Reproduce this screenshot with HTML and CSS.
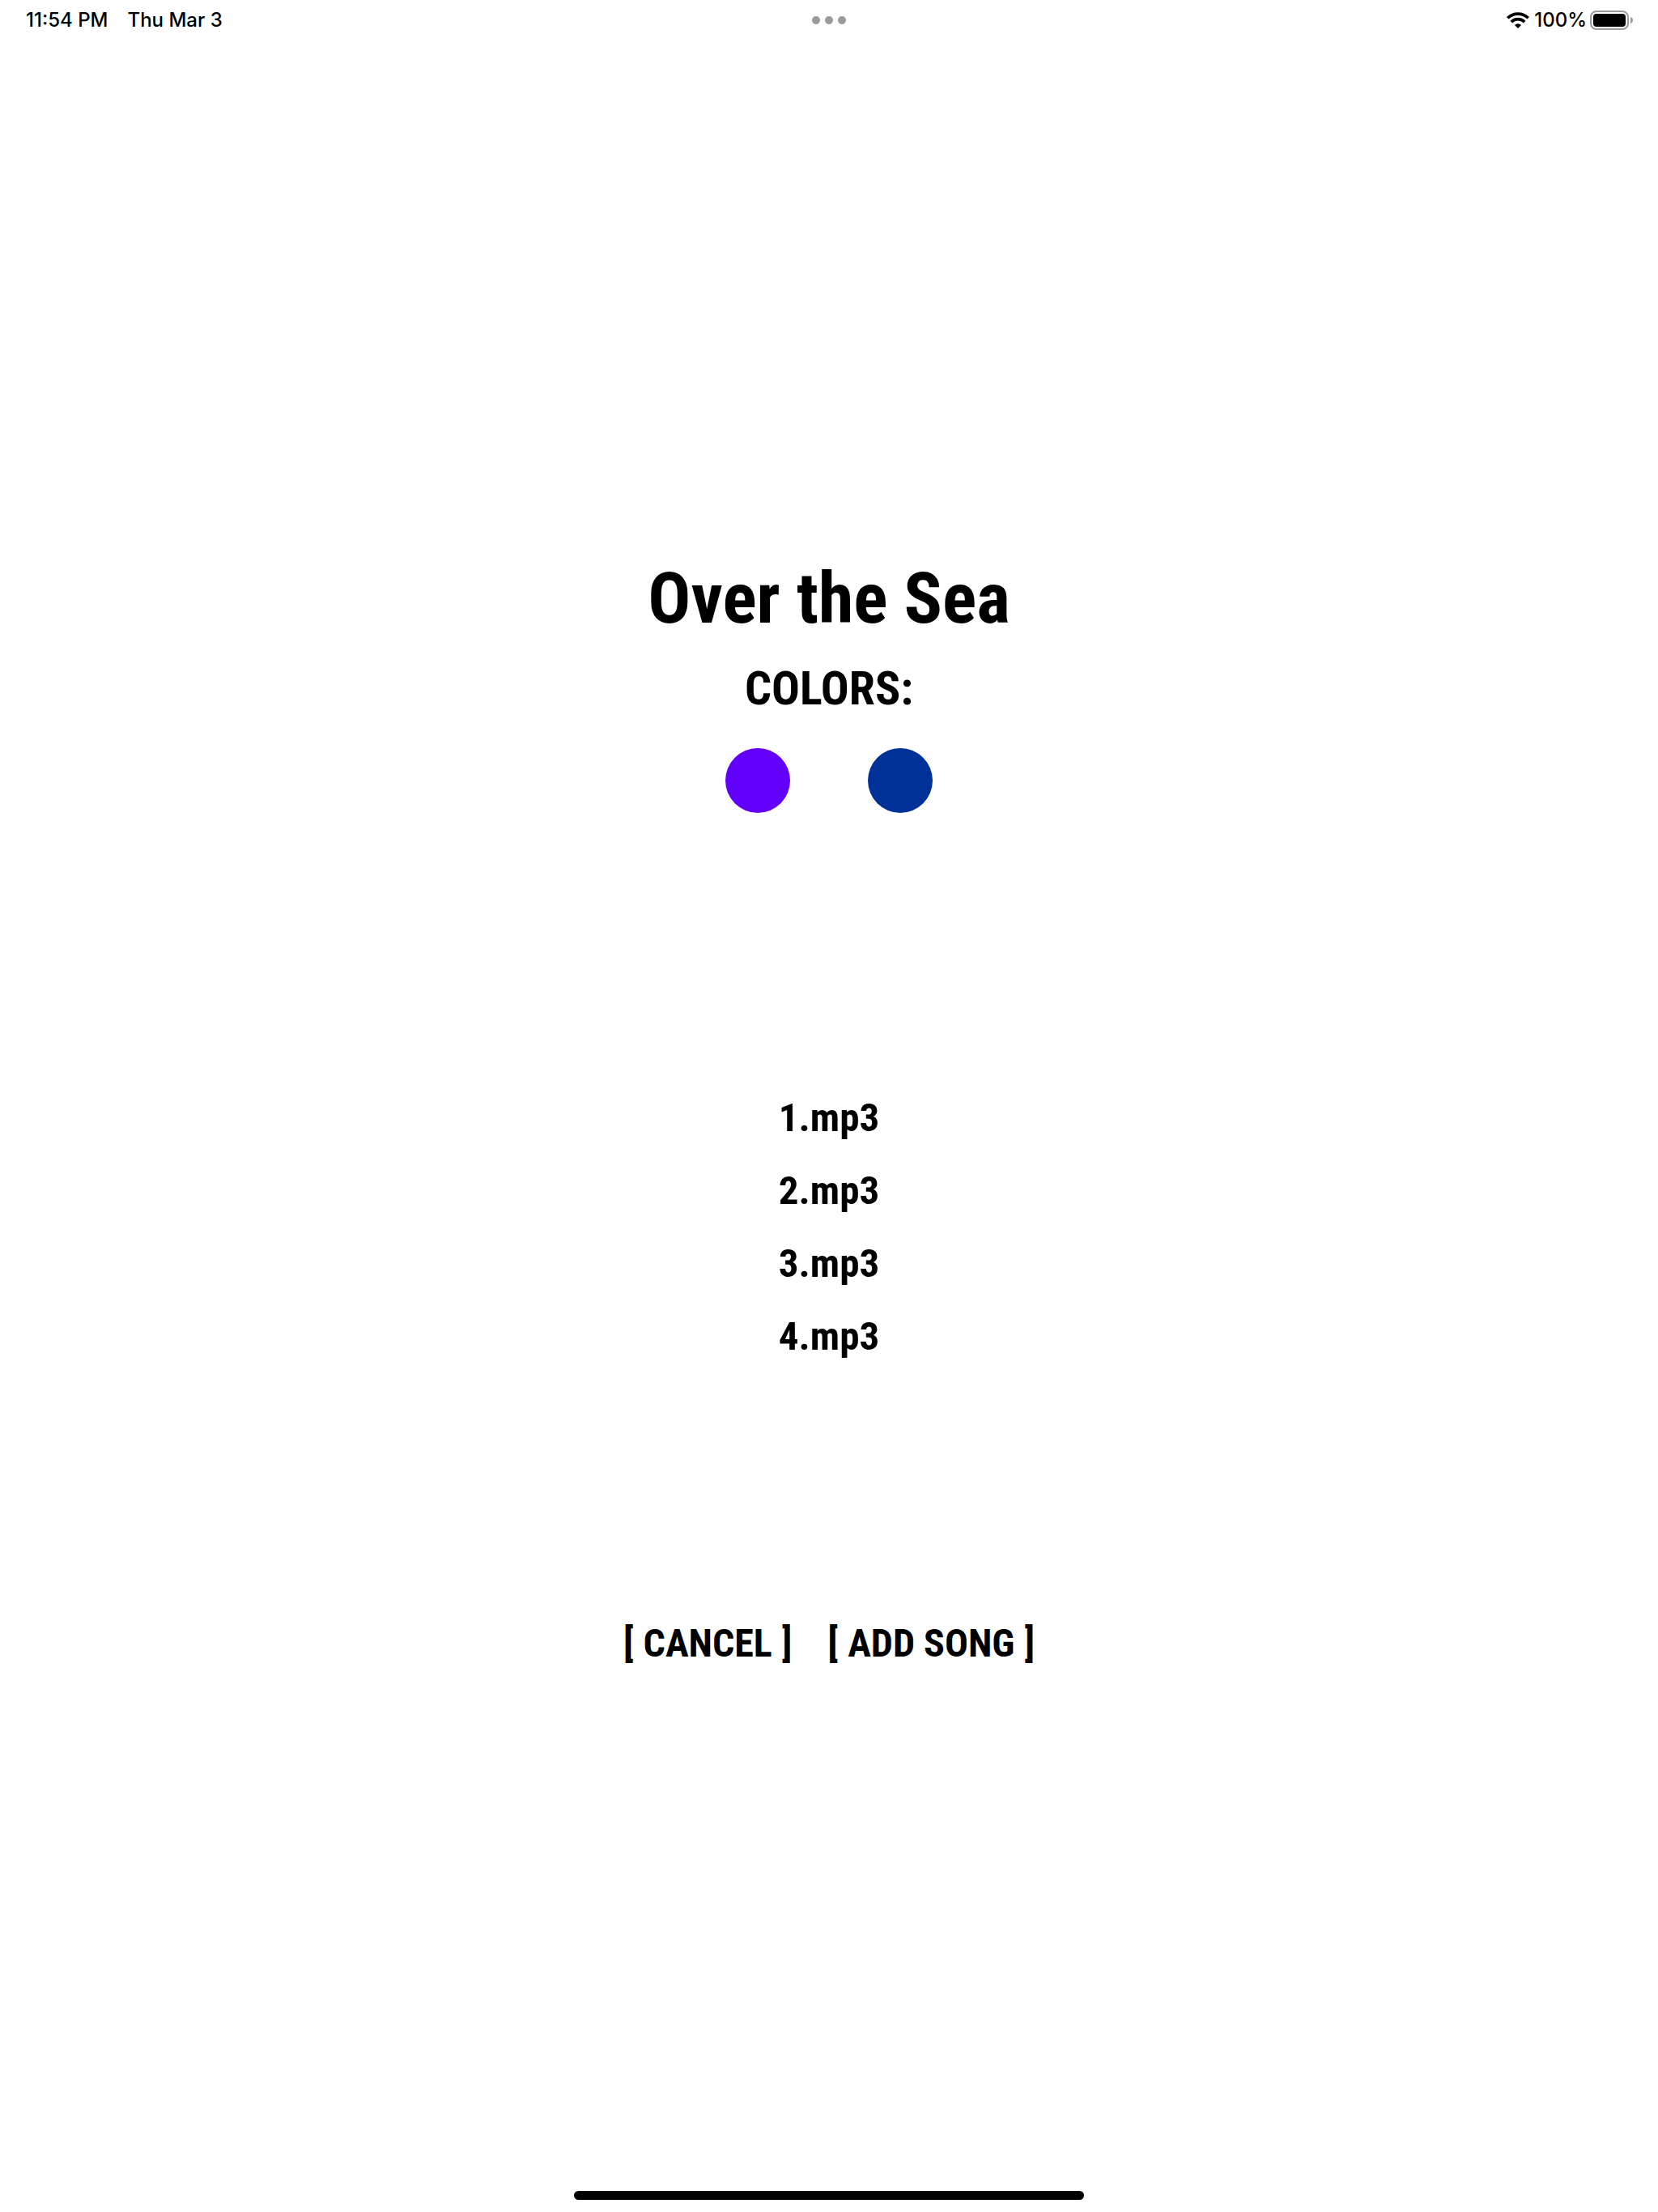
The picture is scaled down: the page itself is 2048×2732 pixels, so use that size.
FILE: index.html
```html
<!DOCTYPE html>
<html lang="en">
<head>
<meta charset="utf-8">
<meta name="viewport" content="width=device-width, initial-scale=1">
<title>Over the Sea</title>
<link rel="stylesheet" href="styles.css">
</head>
<body>
<div class="screen">
  <header class="status-bar">
    <div class="status-left"><span>11:54 PM</span><span>Thu Mar 3</span></div>
    <div class="multitask"><i class="dot"></i><i class="dot"></i><i class="dot"></i></div>
    <div class="status-right">
      <svg class="wifi" viewBox="0 0 28 20" aria-hidden="true">
        <g fill="none" stroke="#000" stroke-width="3.7">
          <path d="M1.2 7.3a18.2 18.2 0 0 1 25.6 0"/>
          <path d="M5.8 12.1a11.6 11.6 0 0 1 16.4 0"/>
        </g>
        <path d="M14 20l-4-4.1a5.8 5.8 0 0 1 8 0z"/>
      </svg>
      <span>100%</span>
      <svg class="battery" viewBox="0 0 54 24" aria-hidden="true">
        <rect x="1" y="1" width="46" height="22" rx="7" fill="none" stroke="#999" stroke-width="2"/>
        <rect x="4" y="4" width="40" height="16" rx="4"/>
        <path d="M50 8q3 1 3 4t-3 4z" fill="#999"/>
      </svg>
    </div>
  </header>
  <main class="album">
    <h1 class="title">Over the Sea</h1>
    <h2 class="subtitle">COLORS:</h2>
    <div class="swatches">
      <button class="swatch swatch-purple" type="button" aria-label="Purple"></button>
      <button class="swatch swatch-blue" type="button" aria-label="Blue"></button>
    </div>
    <ul class="songs">
      <li>1.mp3</li>
      <li>2.mp3</li>
      <li>3.mp3</li>
      <li>4.mp3</li>
    </ul>
    <div class="actions">
      <button class="action" type="button"><span>[</span><span>CANCEL</span><span>]</span></button>
      <button class="action" type="button"><span>[</span><span>ADD SONG</span><span>]</span></button>
    </div>
  </main>
  <footer class="home"><div class="home-indicator"></div></footer>
</div>
</body>
</html>
```
FILE: styles.css
```css
* { box-sizing: border-box; }

body {
  margin: 0;
  background: #fff;
  color: #000;
  font-family: "Roboto Condensed", "Arial Narrow", Roboto, sans-serif;
}

.screen {
  min-height: 100vh;
  display: flex;
  flex-direction: column;
}

.status-bar {
  height: 50px;
  padding: 0 32px;
  display: grid;
  grid-template-columns: 1fr auto 1fr;
  align-items: center;
  font: 500 24px/48px Inter, sans-serif;
}

.status-left { display: flex; gap: 24px; }
.multitask { display: flex; gap: 6px; }
.dot { width: 10px; height: 10px; border-radius: 50%; background: #999; }
.status-right { display: flex; justify-content: flex-end; align-items: center; gap: 6px; }
.wifi { width: 28px; height: 20px; }
.battery { width: 54px; height: 24px; margin-right: -2px; margin-left: -2px; }

.album {
  flex: 1;
  display: flex;
  flex-direction: column;
  align-items: center;
  justify-content: center;
  font-weight: 700;
}

.title { margin: 0; font-size: 88px; line-height: 130px; }
.subtitle { margin: 10px 0 0; font-size: 58px; line-height: 72px; }

.swatches { display: flex; gap: 96px; margin-top: 38px; }
.swatch { width: 80px; height: 80px; padding: 0; border: 0; border-radius: 50%; }
.swatch-purple { background: #6100fa; }
.swatch-blue { background: #003199; }

.songs {
  margin: 332px 0 304px;
  padding: 0;
  list-style: none;
  text-align: center;
  font-size: 49px;
  line-height: 90px;
}

.actions { display: flex; gap: 44px; }

.action {
  display: flex;
  gap: 12px;
  padding: 0;
  border: 0;
  background: none;
  color: inherit;
  font: inherit;
  font-size: 48px;
  line-height: 60px;
}

.home { height: 48px; display: flex; justify-content: center; align-items: flex-end; padding-bottom: 15px; }
.home-indicator { width: 31%; max-width: 630px; height: 11px; border-radius: 6px; background: #000; }
```
